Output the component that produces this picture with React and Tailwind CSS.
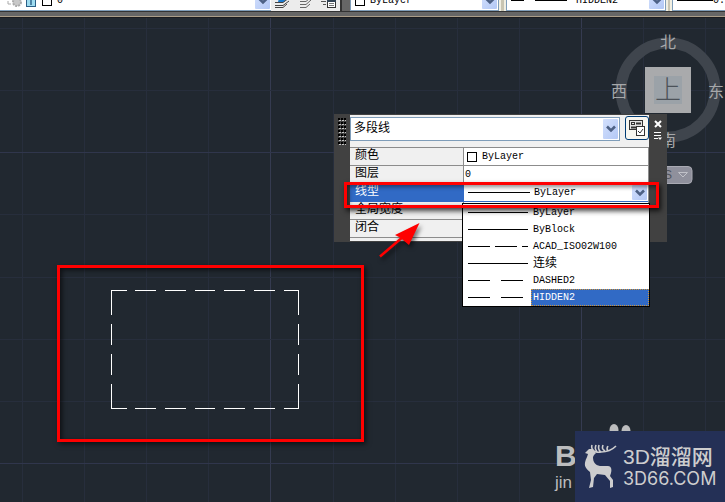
import React, { useState } from "react";

const lineTypes = [
  { name: "ByLayer", dash: "none" },
  { name: "ByBlock", dash: "none" },
  { name: "ACAD_ISO02W100", dash: "22 5" },
  { name: "连续", dash: "none" },
  { name: "DASHED2", dash: "22 11" },
  { name: "HIDDEN2", dash: "22 11" },
];

const gridX = [22, 84, 146, 208, 270, 333, 395, 457, 519, 581, 643, 705];
const gridY = [10, 72, 134, 196, 259, 321, 383, 445];

const Chevron = () => (
  <svg width="10" height="8" viewBox="0 0 10 8" fill="none">
    <path d="M1 1.5 L5 5.5 L9 1.5" stroke="#4d6185" strokeWidth="2.6" />
  </svg>
);

const LineSample = ({ dash, wide }) => (
  <svg
    width={wide ? 62 : 60}
    height="3"
    viewBox={wide ? "0 0 62 3" : "0 0 60 3"}
    className="shrink-0"
  >
    <path d="M0 1.5 H62" stroke="#000" strokeWidth="1" strokeDasharray={dash} />
  </svg>
);

const Swatch = () => (
  <span className="block h-[10px] w-[10px] border border-black bg-white" />
);

const Combo = ({ label, value, options, icon, className, textClass }) => (
  <div className={`relative flex items-center bg-white ${className}`}>
    {icon && (
      <span className="pointer-events-none absolute left-1 flex items-center gap-1">
        {icon}
      </span>
    )}
    <select
      aria-label={label}
      defaultValue={value}
      className={`h-full w-full appearance-none bg-transparent outline-none ${textClass}`}
    >
      {(options || [value]).map((o) => (
        <option key={o}>{o}</option>
      ))}
    </select>
    <span className="pointer-events-none absolute inset-y-px right-px flex w-[15px] items-center justify-center rounded-[1px] bg-linear-to-br from-[#d3e0fd] to-[#b3c8f5]">
      <Chevron />
    </span>
  </div>
);

const Toolbar = () => (
  <header className="shrink-0 font-['Liberation_Mono','Noto_Sans_CJK_SC',monospace] text-[10px] text-black">
    <div className="flex h-[12px] items-end overflow-hidden border-b border-[#333] bg-[#666]">
      <Combo
        label="图层"
        value="0"
        className="h-5 w-[271px] shrink-0 border-b border-[#7f9db9]"
        textClass="pl-[57px]"
        icon={
          <svg width="50" height="16" viewBox="0 0 50 16">
            <path d="M-4 12 L-1 8 M-3 8 L-1 12" stroke="#555" strokeWidth="1" />
            <path d="M4 8 V11 H7" stroke="#aaa" fill="none" />
            <circle cx="13" cy="9" r="4" fill="#c8c8c8" stroke="#aaa" strokeWidth="2" strokeDasharray="2 1" />
            <rect x="22.5" y="3.5" width="9" height="10" fill="#9fdcf0" stroke="#2b5f86" />
            <path d="M27 6 V12" stroke="#2b5f86" strokeWidth="1.4" />
            <rect x="38.5" y="3.5" width="9" height="9" fill="#fff" stroke="#000" />
          </svg>
        }
      />
      <div className="flex h-5 w-[69px] shrink-0 items-center justify-around bg-[#ececec]">
        <button aria-label="图层置为当前">
          <svg width="17" height="16" viewBox="0 0 17 16" fill="none">
            <path d="M5 5 H13 L10 9 H4 Z" fill="#1d7bd0" />
            <path d="M1 9.5 H9 L15 5 M1 12.5 H9 L15 8 M1 14.5 H9 L13 11" stroke="#444" />
          </svg>
        </button>
        <button aria-label="上一个图层">
          <svg width="15" height="16" viewBox="0 0 15 16" fill="none">
            <path d="M2 8.5 H8 L12 5 M2 11.5 H8 L13 7 M2 14.5 H8 L12 11" stroke="#666" />
          </svg>
        </button>
        <button aria-label="图层状态">
          <svg width="17" height="16" viewBox="0 0 17 16" fill="none">
            <path d="M1 8.5 H6 M3 11.5 H6 M2 5.5 H10" stroke="#555" />
            <rect x="7.5" y="6.5" width="8" height="8" fill="#fff" stroke="#333" />
            <path d="M7 8 H16" stroke="#345" strokeWidth="2" />
            <path d="M9 10.5 H14 M9 12.5 H14" stroke="#777" />
          </svg>
        </button>
      </div>
      <div className="mr-2 h-full w-[2px] shrink-0 bg-[#333]" />
      <Combo
        label="颜色控制"
        value="ByLayer"
        icon={<Swatch />}
        className="h-5 w-[149px] shrink-0 border-x border-b border-[#7f9db9]"
        textClass="pl-[19px]"
      />
      <div className="h-full w-[7px] shrink-0 border-x-2 border-[#f1efe2] bg-[#c9c5b2]" />
      <Combo
        label="线型控制"
        value="HIDDEN2"
        icon={<LineSample dash="13 11 32 11" />}
        className="h-5 w-[160px] shrink-0 border-x border-b border-[#7f9db9]"
        textClass="pl-[69px]"
      />
      <div className="h-full w-[6px] shrink-0 border-x-2 border-[#f1efe2] bg-[#c9c5b2]" />
      <div className="flex h-5 grow items-center overflow-hidden border-b border-l border-[#7f9db9] bg-white pl-1">
        <span className="h-px w-9 shrink-0 bg-black" />
        <span className="whitespace-nowrap">0.</span>
      </div>
    </div>
    <div className="h-[6px] border-b border-[#1a1b20] bg-[#666]">
      <div className="h-[5px] border-b border-[#aa9d88]" />
    </div>
  </header>
);

const Drawing = () => (
  <svg className="absolute inset-0 h-full w-full">
    {gridX.map((x) => (
      <path
        key={x}
        d={`M${x + 0.5} 0 V2000`}
        stroke={x === 270 || x === 581 ? "#353b50" : "#272e3c"}
      />
    ))}
    {gridY.map((y) => (
      <path
        key={y}
        d={`M0 ${y + 0.5} H3000`}
        stroke={y === 134 || y === 445 ? "#30364c" : "#272e3c"}
      />
    ))}
    <g stroke="#fff" fill="none">
      {[272.5, 390.5].map((y) => (
        <path
          key={y}
          d={`M111 ${y} H127 M135 ${y} H156 M165 ${y} H186 M195 ${y} H215 M224 ${y} H245 M254 ${y} H275 M284 ${y} H299`}
        />
      ))}
      {[111.5, 298.5].map((x) => (
        <path
          key={x}
          d={`M${x} 272 V297 M${x} 306 V327 M${x} 336 V357 M${x} 366 V391`}
        />
      ))}
    </g>
  </svg>
);

const ViewCube = () => (
  <svg
    className="absolute left-[605px] top-0 font-['Noto_Sans_CJK_SC',sans-serif]"
    width="120"
    height="170"
    viewBox="0 0 120 170"
    textAnchor="middle"
  >
    <circle cx="63" cy="72" r="47" fill="none" stroke="#3f454d" strokeWidth="11" />
    <rect x="40" y="49" width="46" height="46" fill="#a9aaac" />
    <rect x="49" y="58" width="28" height="28" fill="#9ba2a8" />
    <text x="63" y="81" fontSize="26" fontWeight="300" fill="#4c5259">上</text>
    <g fill="#a6a8aa" fontSize="16">
      <text x="63" y="30">北</text>
      <text x="14" y="79">西</text>
      <text x="111" y="79">东</text>
      <text x="63" y="128">南</text>
    </g>
    <rect x="30" y="148.5" width="57" height="17" rx="4" fill="#8f909c" stroke="#a9aab3" />
    <text x="53" y="161" fontSize="12" fill="#50545e" className="font-['Liberation_Sans',sans-serif]">
      WCS
    </text>
    <path d="M73.5 154.5 H82.5 L78 159 Z" fill="none" stroke="#c0c1c8" />
  </svg>
);

const PropertyRow = ({ label, active, children }) => (
  <tr className="h-[18px]">
    <th
      scope="row"
      className={`w-[113px] border-b pl-[5px] text-left align-top text-[12px] leading-[17px] font-normal ${
        active
          ? "border-[#316ac5] bg-[#316ac5] text-white"
          : "border-[#8c8c8c] bg-[#f0f0f0]"
      }`}
    >
      {label}
    </th>
    <td
      className={`border-b border-l bg-white p-0 ${
        active ? "border-[#316ac5]" : "border-[#8c8c8c]"
      }`}
    >
      {children}
    </td>
  </tr>
);

const QuickProperties = () => {
  const [selected, setSelected] = useState("HIDDEN2");

  return (
    <section
      aria-label="快捷特性"
      className="absolute left-[334px] top-[96px] flex w-[333px] bg-[#414141] py-px font-['Liberation_Mono','Noto_Sans_CJK_SC',monospace] text-[10px] text-black"
    >
      <div className="flex w-4 justify-center pt-[3px]">
        <svg width="8" height="27" viewBox="0 0 8 27">
          {[0, 4, 8, 12, 16, 20, 24].map((y) => (
            <g key={y}>
              <path d={`M0 ${y + 1} H8`} stroke="#000" strokeWidth="2" strokeDasharray="2 1" />
              <path d={`M1 ${y + 2.5} H8`} stroke="#c4c4c4" strokeDasharray="2 1" />
            </g>
          ))}
        </svg>
      </div>
      <div className="w-[299px] bg-[#f0f0f0] pb-[3px]">
        <div className="flex h-8 items-start justify-between pt-px">
          <Combo
            label="对象类型"
            value="多段线"
            className="mt-px h-6 w-[270px] border border-[#7f9db9]"
            textClass="pl-[3px] text-[12px]"
          />
          <button
            aria-label="自定义"
            className="flex h-6 w-6 items-center justify-center rounded-[3px] border border-[#003c74] bg-[#f8f7f1]"
          >
            <svg width="16" height="16" viewBox="0 0 16 16" fill="none" stroke="#333">
              <rect x="0.5" y="0.5" width="13" height="9" fill="#e4e4e4" />
              <rect x="2.5" y="2.5" width="3" height="2" />
              <path d="M7 3.5 H12 M2 7.5 H7" strokeWidth="2" />
              <rect x="7.5" y="6.5" width="8" height="9" fill="#fff" />
              <path d="M9 11 L11 13 L14 9" />
            </svg>
          </button>
        </div>
        <table className="w-full table-fixed border-separate border-spacing-0 border-t border-r border-[#8c8c8c]">
          <colgroup>
            <col className="w-[113px]" />
            <col />
          </colgroup>
          <tbody>
            <PropertyRow label="颜色">
              <div className="flex items-center gap-[5px] pl-[3px] leading-[17px]">
                <Swatch />
                ByLayer
              </div>
            </PropertyRow>
            <PropertyRow label="图层">
              <div className="pl-px leading-[17px]">0</div>
            </PropertyRow>
            <PropertyRow label="线型" active>
              <Combo
                label="线型"
                value="ByLayer"
                icon={<LineSample dash="none" wide />}
                className="h-[17px]"
                textClass="pl-[70px]"
              />
            </PropertyRow>
            <PropertyRow label="全局宽度" />
            <PropertyRow label="闭合" />
          </tbody>
        </table>
      </div>
      <div className="flex grow flex-col items-center gap-1 pt-[5px]">
        <button aria-label="关闭">
          <svg width="8" height="8" viewBox="0 0 8 8">
            <path d="M1 1 L7 7 M7 1 L1 7" stroke="#fff" strokeWidth="2" />
          </svg>
        </button>
        <button aria-label="选项">
          <svg width="8" height="8" viewBox="0 0 8 8">
            <path d="M0 0.5 H7 M0 3.5 H7 M0 6.5 H4" stroke="#fff" />
            <path d="M4 5.5 H8 L6 8 Z" fill="#fff" />
          </svg>
        </button>
      </div>

      <ul
        role="listbox"
        aria-label="线型"
        className="absolute left-[128px] top-[89px] w-[188px] border border-black bg-white"
      >
        {lineTypes.map((type) => (
          <li
            key={type.name}
            role="option"
            aria-selected={selected === type.name}
            onClick={() => setSelected(type.name)}
            className="flex h-[17px] items-center gap-[3px] pl-[5px]"
          >
            <LineSample dash={type.dash} />
            <span
              className={`flex h-full grow items-center border border-dotted pl-px ${
                type.name === "连续" ? "text-[12px]" : ""
              } ${
                selected === type.name
                  ? "border-[#ce953a] bg-[#316ac5] text-white"
                  : "border-transparent"
              }`}
            >
              {type.name}
            </span>
          </li>
        ))}
      </ul>
    </section>
  );
};

const Annotations = () => (
  <div className="pointer-events-none">
    <div className="absolute left-[57px] top-[247px] h-[177px] w-[307px] border-3 border-[#ff0000] shadow-[2px_2px_5px_#0009,inset_2px_2px_5px_#0009]" />
    <div className="absolute left-[344px] top-[164px] h-[26px] w-[315px] border-3 border-[#ff0000] shadow-[2px_3px_5px_#000b,inset_2px_2px_4px_#0007]" />
    <svg
      className="absolute left-[374px] top-[200px] drop-shadow-[2px_3px_2px_#0008]"
      width="50"
      height="44"
      viewBox="0 0 50 44"
    >
      <path d="M6 38.5 L30 18" stroke="#f00" strokeWidth="2.5" />
      <path d="M45.5 5 L21 17 L27 20 L29 22 L35 27 Z" fill="#f00" />
    </svg>
  </div>
);

const Watermark = () => (
  <>
    <div className="absolute bottom-0 right-[150px] flex h-[64px] w-5 flex-col font-['Liberation_Sans',sans-serif] text-[#bcbdbe]">
      <span className="text-[30px] leading-[35px] font-bold">B</span>
      <span className="text-[17px] leading-[20px]">jin</span>
    </div>
    <svg className="absolute bottom-[70px] right-[92px]" width="26" height="8" viewBox="0 0 26 8">
      <ellipse cx="7" cy="6" rx="4.5" ry="6" fill="#bcbdbe" />
      <ellipse cx="19" cy="7" rx="4.5" ry="6" fill="#bcbdbe" />
    </svg>
    <footer className="absolute bottom-0 right-0 flex h-[71px] w-[150px] items-center bg-[#243056] pl-2 text-[#cdcdce]">
      <svg width="36" height="46" viewBox="0 0 36 46">
        <path
          d="M2 9 L6 5 L9 5 L13 9 L11 11 L10 13 C10 18 12 21 17 22 L25 22 C28 22 29 25 28 29 L27 32 L30 36 L30 43 L27 44 L27 37 L22 31 L14 30 L11 34 L10 43 L6 44 L8 36 L7 28 C2 24 0 21 4 13 L5 10 Z"
          fill="currentColor"
        />
        <path
          d="M9 6 C10 7 14 9 18 8 C24 8 29 6 33 2 M12 8 C9 5 8 4 9 1 M14 8 C12 5 12 4 13 1 M18 8 C15 6 15 4 16 1 M22 7 C19 5 19 4 20 1 M25 7 C23 5 24 4 25 2"
          fill="none"
          stroke="currentColor"
          strokeWidth="1.6"
        />
      </svg>
      <div className="flex grow flex-col whitespace-nowrap pl-1 font-['Liberation_Sans','Noto_Sans_CJK_SC',sans-serif]">
        <span className="text-[21px] leading-[24px] font-medium">3D溜溜网</span>
        <span className="font-['Inter',sans-serif] text-[18px] leading-[20px]">3D66.COM</span>
      </div>
    </footer>
  </>
);

const App = () => {
  return (
    <div className="flex min-h-screen flex-col overflow-hidden bg-[#212830]">
      <Toolbar />
      <main className="relative grow overflow-hidden">
        <Drawing />
        <ViewCube />
        <QuickProperties />
        <Annotations />
        <Watermark />
      </main>
    </div>
  );
};

export default App;
